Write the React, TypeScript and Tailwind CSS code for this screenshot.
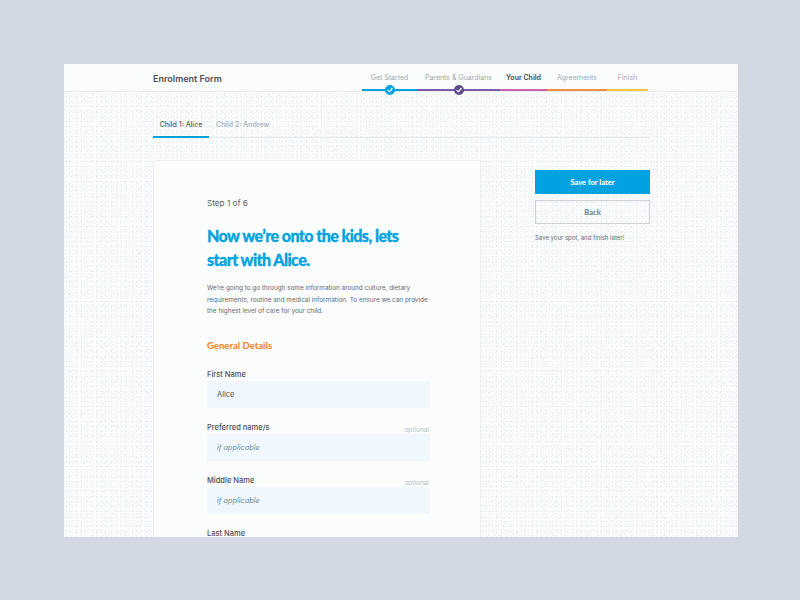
import React from "react";

const Check = () => (
  <svg width="6" height="6" viewBox="0 0 10 10" fill="none" stroke="white" strokeWidth="2" strokeLinecap="round" strokeLinejoin="round">
    <path d="M1.5 5.5 L4 8 L8.5 2.5" />
  </svg>
);

const steps = [
  { label: "Get Started", w: "w-[55px]", bar: "bg-[#00a3e0]", dot: "bg-[#00a3e0]", active: false },
  { label: "Parents & Guardians", w: "w-[83px]", bar: "bg-[#7b5ea7]", dot: "bg-[#5f4b8b]", active: false },
  { label: "Your Child", w: "w-[47px]", bar: "bg-[#c763a8]", dot: "", active: true },
  { label: "Agreements", w: "w-[60px]", bar: "bg-[#f58a3c]", dot: "", active: false },
  { label: "Finish", w: "w-[41px]", bar: "bg-[#fbc93d]", dot: "", active: false },
];

function Field({ label, value, placeholder, optional }: { label: string; value?: string; placeholder?: string; optional?: boolean }) {
  return (
    <div className="mb-[13.3px]">
      <div className="flex justify-between items-end h-[13px]">
        <span className="text-[7.5px] leading-[12px] font-medium text-[#4a4f57]">{label}</span>
        {optional && <span className="text-[6.5px] leading-[8px] text-[#b6bfca] mr-[1px]">optional</span>}
      </div>
      {label !== "Last Name" && (
        <div className="h-[27px] pt-[2px] bg-[#f0f8fe] flex items-center pl-[10px] text-[7.5px] text-[#4a4f57]">
          {value ?? <span className="italic text-[#6f8a99] text-[7.3px]">{placeholder}</span>}
        </div>
      )}
    </div>
  );
}

export default function App() {
  return (
    <div className="w-[800px] h-[600px] bg-[#d3d9e2] pt-[64px] pl-[64px] font-['Inter','Noto_Sans',sans-serif]">
      <div className="w-[674px] h-[473px] overflow-hidden bg-[#fbfcfc] bg-[radial-gradient(#e4ebf2_0.6px,transparent_0.8px),radial-gradient(#e6edf3_0.6px,transparent_0.8px),radial-gradient(#e8eef4_0.7px,transparent_0.9px),radial-gradient(#e9eff5_0.7px,transparent_0.9px),radial-gradient(#eef3f7_0.6px,transparent_0.8px),radial-gradient(#ebf1f6_0.6px,transparent_0.8px)] bg-[length:5px_5px,7px_7px,11px_11px,13px_13px,3px_3px,4px_4px] bg-[position:0_0,2px_3px,1px_4px,4px_1px,1px_2px,3px_0] flex flex-col">
        <header className="h-[28px] shrink-0 bg-[#fbfcfc] border-b border-[#e6eaee] flex pl-[89px]">
          <div className="w-[209px] pt-[8px] text-[9px] leading-[13px] font-semibold text-[#4a4f57]">Enrolment Form</div>
          <div className="flex">
            {steps.map((s) => (
              <div key={s.label} className={`${s.w} relative flex flex-col items-center`}>
                <div className={`h-[26px] pt-[9px] text-[7px] leading-[10px] whitespace-nowrap ${s.active ? "font-semibold text-[#3f444b]" : "text-[#a3a8af]"}`}>
                  {s.label}
                </div>
                <div className={`h-[2px] w-full ${s.bar}`} />
                {s.dot && (
                  <div className={`absolute top-[21px] w-[10px] h-[10px] rounded-full flex items-center justify-center ${s.dot}`}>
                    <Check />
                  </div>
                )}
              </div>
            ))}
          </div>
        </header>

        <div className="pl-[89px] w-[586px]">
          <div className="mt-[18px] h-[28px] border-b border-[#e6eaee] flex text-[7px] font-medium">
            <div className="w-[56px] h-[28px] border-b-2 border-[#00a3e0] flex justify-center pt-[10px] leading-[10px] text-[#5a5f67]">Child 1: Alice</div>
            <div className="pl-[7px] pt-[10px] leading-[10px] text-[#a9aeb6]">Child 2: Andrew</div>
          </div>

          <div className="flex mt-[22px]">
            <div className="w-[328px] h-[400px] shrink-0 bg-[#fbfcfc] border border-[#eef1f4] pl-[53px] pr-[50px] pt-[36px]">
              <div className="text-[8.2px] leading-[13px] text-[#5a5f67]">Step 1 of 6</div>
              <h1 className="mt-[14px] text-[16px] leading-[24px] font-black text-[#00a3e0] font-['Lato',sans-serif] tracking-[-0.55px] [-webkit-text-stroke:0.3px_#00a3e0]">
                Now we’re onto the kids, lets<br />start with Alice.
              </h1>
              <p className="mt-[11px] text-[6.4px] leading-[11.5px] text-[#666b73]">
                We’re going to go through some information around culture, dietary requirements, routine and medical information. To ensure we can provide the highest level of care for your child.
              </p>
              <h2 className="mt-[21px] mb-[15px] text-[9.5px] leading-[14px] font-black text-[#f58a3c] font-['Lato',sans-serif]">General Details</h2>
              <Field label="First Name" value="Alice" />
              <Field label="Preferred name/s" placeholder="if applicable" optional />
              <Field label="Middle Name" placeholder="if applicable" optional />
              <Field label="Last Name" />
            </div>

            <aside className="ml-[54px] w-[115px] pt-[10px]">
              <div className="h-[24px] pt-[1px] bg-[#00a3e0] text-white text-[7.5px] font-black font-['Lato',sans-serif] flex items-center justify-center">Save for later</div>
              <div className="mt-[6px] h-[24px] pt-[1px] border border-[#cfd3d8] text-[#7d8288] text-[7.5px] font-black font-['Lato',sans-serif] flex items-center justify-center">Back</div>
              <div className="mt-[9px] text-[6px] leading-[10px] text-[#666b73]">Save your spot, and finish later!</div>
            </aside>
          </div>
        </div>
      </div>
    </div>
  );
}
